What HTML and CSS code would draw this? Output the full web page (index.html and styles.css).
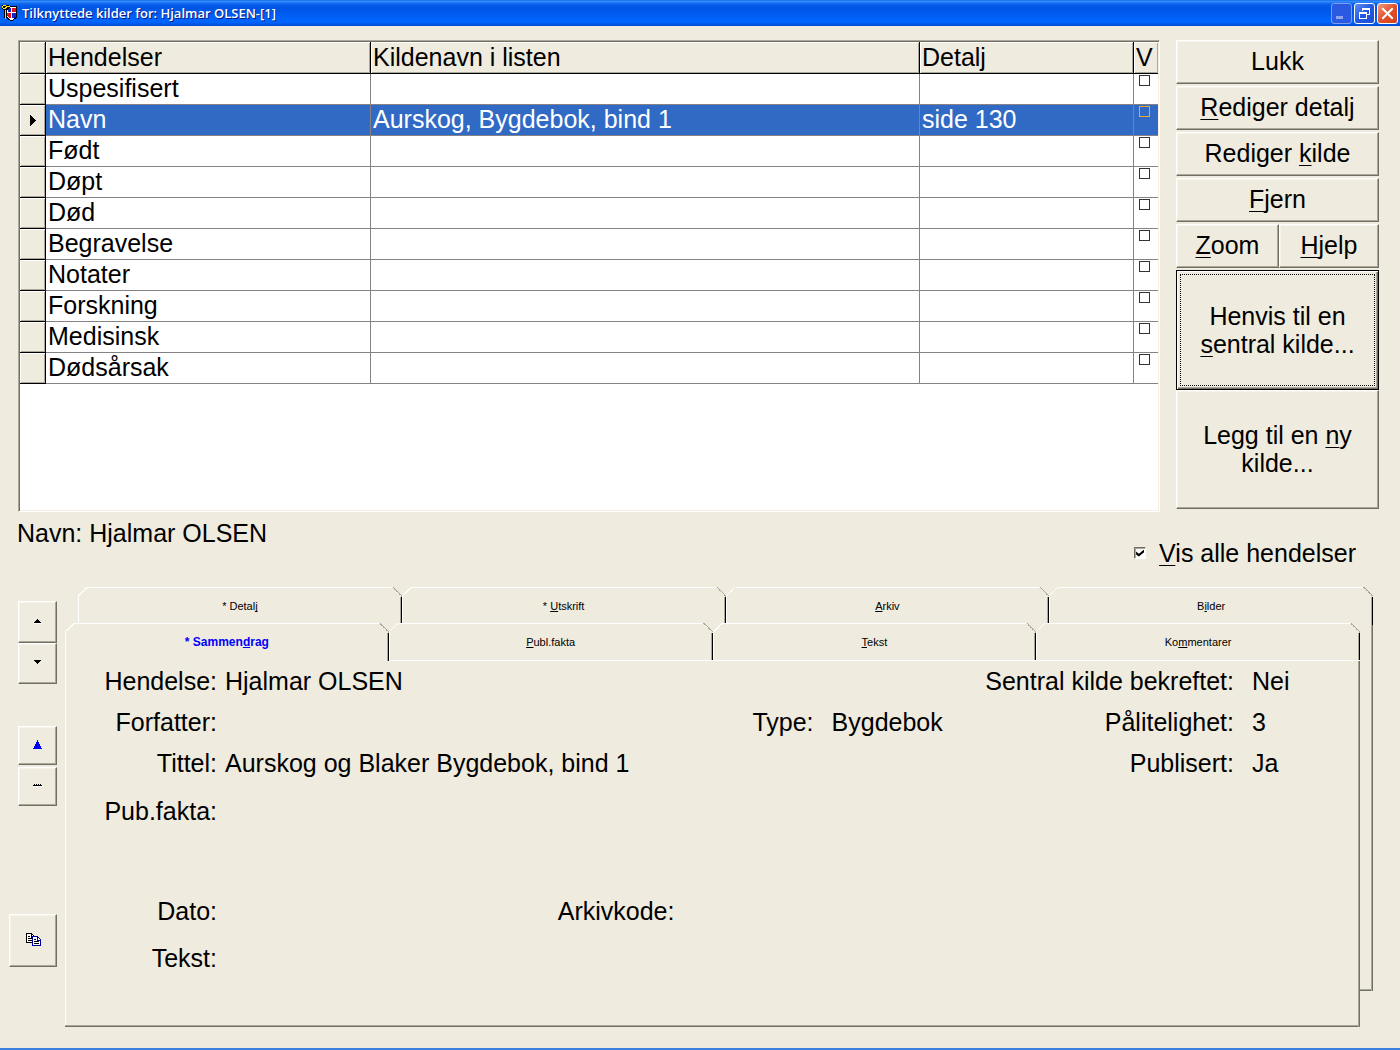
FILE: index.html
```html
<!DOCTYPE html>
<html lang="no">
<head>
<meta charset="utf-8">
<title>Tilknyttede kilder for: Hjalmar OLSEN-[1]</title>
<link rel="stylesheet" href="styles.css">
</head>
<body>
<header class="titlebar">
  <svg class="app-icon" width="16" height="18" viewBox="0 0 16 18" shape-rendering="crispEdges" aria-hidden="true">
    <path d="M2 2h13v11l-2 2-3 2-4-1-2-2H2z" fill="#000"/>
    <path d="M3 3h1v12H3z" fill="#c9c7ba"/>
    <path d="M5 3h9v9l-2 3-3 1-2-1-2-3z" fill="#fff"/>
    <path d="M6 4h3v4H6zM10 9h4v3l-2 2h-2z" fill="#1722c8"/>
    <path d="M10 4h4v4h-4zM5 9h4v5H7l-2-2z" fill="#e0161c"/>
    <path d="M0 1h5l3 1v2L5 6H1L0 4z" fill="#000"/>
    <path d="M1 1h3v1H1zM0 2h1v2H0zM1 4h3v1H1zM4 2h4v1H4zM3 3h2v1H3z" fill="#ffe800"/>
  </svg>
  <h1 class="title">Tilknyttede kilder for: Hjalmar OLSEN-[1]</h1>
  <div class="window-buttons">
    <button class="win-btn win-min" aria-label="Minimer"><svg width="19" height="19" viewBox="0 0 19 19" shape-rendering="crispEdges"><path d="M4 12h7v3H4z" fill="#8fa4ee"/></svg></button>
    <button class="win-btn" aria-label="Gjenopprett"><svg width="19" height="19" viewBox="0 0 19 19" shape-rendering="crispEdges" fill="none" stroke="#fff"><path d="M7 6.500V4.500H14.500V10.500H12M7 5.500H14M4.500 8.500H11.500V14.500H4.500zM4 9.500H12"/></svg></button>
    <button class="win-btn win-close" aria-label="Lukk vindu"><svg width="19" height="19" viewBox="0 0 19 19"><path d="M5 5l9 9M14 5l-9 9" stroke="#fff" stroke-width="2" stroke-linecap="square"/></svg></button>
  </div>
</header>

<main class="content">
  <section class="upper">
    <div class="list-box">
      <table class="list">
        <colgroup><col class="c-mark"><col class="c-event"><col><col class="c-detail"><col class="c-v"></colgroup>
        <thead>
          <tr><th></th><th>Hendelser</th><th>Kildenavn i listen</th><th>Detalj</th><th>V</th></tr>
        </thead>
        <tbody>
          <tr><th></th><td>Uspesifisert</td><td></td><td></td><td><input type="checkbox" aria-label="V Uspesifisert"></td></tr>
          <tr class="selected"><th><svg width="6" height="11" viewBox="0 0 6 11" shape-rendering="crispEdges"><path d="M0 0h1v1h1v1h1v1h1v1h1v1h1v1H5v1H4v1H3v1H2v1H1v1H0z"/></svg></th><td>Navn</td><td>Aurskog, Bygdebok, bind 1</td><td>side 130</td><td><input type="checkbox" aria-label="V Navn"></td></tr>
          <tr><th></th><td>Født</td><td></td><td></td><td><input type="checkbox" aria-label="V Født"></td></tr>
          <tr><th></th><td>Døpt</td><td></td><td></td><td><input type="checkbox" aria-label="V Døpt"></td></tr>
          <tr><th></th><td>Død</td><td></td><td></td><td><input type="checkbox" aria-label="V Død"></td></tr>
          <tr><th></th><td>Begravelse</td><td></td><td></td><td><input type="checkbox" aria-label="V Begravelse"></td></tr>
          <tr><th></th><td>Notater</td><td></td><td></td><td><input type="checkbox" aria-label="V Notater"></td></tr>
          <tr><th></th><td>Forskning</td><td></td><td></td><td><input type="checkbox" aria-label="V Forskning"></td></tr>
          <tr><th></th><td>Medisinsk</td><td></td><td></td><td><input type="checkbox" aria-label="V Medisinsk"></td></tr>
          <tr><th></th><td>Dødsårsak</td><td></td><td></td><td><input type="checkbox" aria-label="V Dødsårsak"></td></tr>
        </tbody>
      </table>
    </div>
    <div class="actions">
      <button class="btn">Lukk</button>
      <button class="btn"><u>R</u>ediger detalj</button>
      <button class="btn">Rediger <u>k</u>ilde</button>
      <button class="btn"><u>F</u>jern</button>
      <div class="pair">
        <button class="btn"><u>Z</u>oom</button>
        <button class="btn"><u>H</u>jelp</button>
      </div>
      <div class="stack">
        <button class="btn tall default"><span class="focus-ring"><span>Henvis til en<br><u>s</u>entral kilde...</span></span></button>
        <button class="btn tall">Legg til en <u>n</u>y<br>kilde...</button>
      </div>
    </div>
  </section>

  <div class="status">
    <span>Navn: Hjalmar OLSEN</span>
    <label class="show-all"><input type="checkbox" checked><span><u>V</u>is alle hendelser</span></label>
  </div>

  <section class="lower">
    <div class="tools">
      <div class="tool-group">
        <button class="btn tool tool-up" aria-label="Forrige"><svg width="8" height="5" viewBox="0 0 8 5" shape-rendering="crispEdges"><path d="M3 0h1v1h1v1h1v1h1v1H0V3h1V2h1V1h1z"/><path d="M0 4h8v1H0z" fill="#fff"/></svg></button>
        <button class="btn tool tool-down" aria-label="Neste"><svg width="8" height="5" viewBox="0 0 8 5" shape-rendering="crispEdges"><path d="M0 0h7v1H6v1H5v1H4v1H3V3H2V2H1V1H0z"/></svg></button>
      </div>
      <div class="tool-group spaced">
        <button class="btn tool" aria-label="Flytt opp"><svg width="9" height="9" viewBox="0 0 9 9" shape-rendering="crispEdges"><path d="M4 0h1v2h1v2h1v2h1v2h1v1H0V8h1V6h1V4h1V2h1z" fill="#00f"/></svg></button>
        <button class="btn tool" aria-label="Fjern merke"><svg width="9" height="3" viewBox="0 0 9 3" shape-rendering="crispEdges"><path d="M0 1h9v1H0zM1 0h1v1H1zM3 0h1v1H3zM5 0h1v1H5zM7 0h1v1H7z"/><path d="M0 2h9v1H0z" fill="#fff"/></svg></button>
      </div>
      <button class="btn copy" aria-label="Kopier"><svg width="15" height="13" viewBox="0 0 15 13" shape-rendering="crispEdges"><path d="M.5.500H5.500L8.500 3.500V9.500H.5z" fill="#fff" stroke="#000"/><path d="M2 3.500h2M2 5.500h4M2 7.500h4M5.500 1v3H8" stroke="#000" fill="none"/><path d="M6.500 3.500H11.500L14.500 6.500V12.500H6.500z" fill="#fff" stroke="#00009c"/><path d="M11.500 4v3H14" stroke="#00009c" fill="none"/><path d="M8 6.500h2M8 8.500h5M8 10.500h5" stroke="#000"/></svg></button>
    </div>

    <div class="notebook">
      <div class="card card-back">
        <div class="tabs">
          <button class="tab">* Detal<u>j</u></button>
          <button class="tab">* <u>U</u>tskrift</button>
          <button class="tab"><u>A</u>rkiv</button>
          <button class="tab">B<u>i</u>lder</button>
        </div>
      </div>
      <div class="card card-front">
        <div class="tabs">
          <button class="tab active">* Sammen<u>d</u>rag</button>
          <button class="tab"><u>P</u>ubl.fakta</button>
          <button class="tab"><u>T</u>ekst</button>
          <button class="tab">Ko<u>m</u>mentarer</button>
        </div>
        <div class="sheet">
          <span class="label">Hendelse:</span><span class="value">Hjalmar OLSEN</span>
          <span class="label wide">Sentral kilde bekreftet:</span><span class="value far">Nei</span>

          <span class="label first">Forfatter:</span>
          <span class="label wide">Type:</span>
          <div class="type"><span>Bygdebok</span><span>Pålitelighet:</span></div><span class="value far">3</span>

          <span class="label first">Tittel:</span><span class="value title-value">Aurskog og Blaker Bygdebok, bind 1</span>
          <span class="label">Publisert:</span><span class="value far">Ja</span>

          <span class="label first">Pub.fakta:</span>

          <span class="label first">Dato:</span><span class="label">Arkivkode:</span>

          <span class="label first">Tekst:</span>
        </div>
      </div>
    </div>
  </section>
</main>
</body>
</html>
```
FILE: styles.css
```css
:root {
  --face: #efebde;
  --light: #fff;
  --shade: #aca899;
  --dark: #716f64;
  --grid: #848284;
  --select: #316ac5;
}

* { box-sizing: border-box; }

body {
  margin: 0;
  min-height: 100vh;
  display: flex;
  flex-direction: column;
  background: var(--face);
  border-bottom: 2px solid #3a80dc;
  color: #000;
  font: 25px/28px "Liberation Sans", Arial, sans-serif;
}

button { font: inherit; color: inherit; }

u {
  text-decoration-thickness: 1px;
  text-underline-offset: 3px;
  text-decoration-skip-ink: none;
}

svg { display: block; }

/* Title bar */
.titlebar {
  display: flex;
  align-items: center;
  height: 26px;
  padding: 0 2px;
  background: linear-gradient(#0a5be0 0, #3a93ff 1px, #0a62ee 4px, #0054e3 8px, #0060f8 17px, #0066ff 22px, #0049d0 26px);
}

.title {
  flex: 1;
  margin: 0 0 0 4px;
  color: #fff;
  font: 600 13px/16px "Open Sans", "Trebuchet MS", sans-serif;
  text-shadow: 1px 1px #0a1883;
}

.window-buttons { display: flex; gap: 2px; }

.win-btn {
  width: 21px;
  height: 21px;
  padding: 0;
  border: 1px solid #fff;
  border-radius: 3px;
  background: linear-gradient(135deg, #5d8ef8, #2458e0 50%, #1c50d8);
}

.win-min { border-color: #7b9cf2; background: #2a5ae2; }
.win-close { background: linear-gradient(135deg, #f09a80, #e2512c 50%, #d0401a); }

/* Upper part */
.content {
  flex: 1;
  display: flex;
  flex-direction: column;
  padding: 14px 0 21px;
}

.upper {
  display: flex;
  gap: 16px;
  padding: 0 21px 0 18px;
}

.list-box {
  flex: 1;
  min-height: 472px;
  border: 1px solid;
  border-color: var(--shade) var(--light) var(--light) var(--shade);
  background: #fff;
  box-shadow: inset 1px 1px var(--dark), inset -1px -1px #f8efe4;
  padding: 1px;
}

.list {
  width: 100%;
  table-layout: fixed;
  border-spacing: 0;
}

.c-mark { width: 26px; }
.c-event { width: 325px; }
.c-detail { width: 214px; }
.c-v { width: 24px; }

.list th,
.list td {
  height: 31px;
  padding: 0 2px;
  text-align: left;
  vertical-align: top;
  font-weight: normal;
  border-right: 1px solid var(--grid);
  border-bottom: 1px solid var(--grid);
}

.list th {
  background: var(--face);
  border-color: #000;
  box-shadow: inset 1px 1px var(--light), inset -1px -1px var(--shade);
}

.list thead th { height: 32px; padding-top: 1px; }
.list tbody th { vertical-align: middle; padding-left: 10px; }
.list tr > :last-child { border-right: 0; }
.list .selected td { background: var(--select); color: #fff; }

.list input {
  appearance: none;
  display: block;
  width: 11px;
  height: 11px;
  margin: 1px 0 0 3px;
  border: 1px solid #333;
}

.list .selected input { border-color: #f5a623; }

/* Raised buttons */
.btn {
  padding: 0 0 2px;
  border: 1px solid;
  border-color: var(--light) var(--dark) var(--dark) var(--light);
  border-radius: 0;
  background: var(--face);
  box-shadow: inset -1px -1px var(--shade), inset 1px 1px #f8f3e8;
}

.actions {
  display: flex;
  flex-direction: column;
  gap: 2px;
  width: 203px;
}

.actions .btn { height: 44px; }
.pair { display: grid; grid-template-columns: 103fr 100fr; }
.stack { display: flex; flex-direction: column; }
.actions .tall { height: 119px; }

.actions .default {
  height: 120px;
  padding: 3px;
  border-color: #000;
  box-shadow: inset 1px 1px var(--light), inset -1px -1px var(--dark), inset -2px -2px var(--shade);
}

.focus-ring {
  display: grid;
  align-content: center;
  height: 100%;
  border: 1px dotted #000;
}

/* Status line */
.status {
  display: flex;
  justify-content: space-between;
  padding: 7px 44px 20px 17px;
}

.show-all {
  display: flex;
  align-items: center;
  gap: 13px;
  margin-top: 20px;
}

.show-all input {
  appearance: none;
  display: grid;
  place-items: center;
  width: 12px;
  height: 12px;
  margin: 0;
  border: 1px solid;
  border-color: var(--dark) var(--light) var(--light) var(--dark);
  box-shadow: inset 1px 1px var(--shade);
  background: #fff;
}

.show-all input:checked::before {
  content: "";
  width: 8px;
  height: 7px;
  background: #000;
  clip-path: polygon(0 30%, 35% 60%, 100% 0, 100% 40%, 35% 100%, 0 70%);
}

/* Lower part */
.lower {
  flex: 1;
  display: flex;
  gap: 8px;
  padding: 0 27px 0 9px;
}

.tools {
  display: flex;
  flex-direction: column;
  align-items: flex-end;
  width: 48px;
  padding-top: 14px;
}

.tool-group { display: flex; flex-direction: column; }
.spaced { gap: 2px; margin: 42px 0 108px; }

.tools .btn { display: grid; place-items: center; }
.tools .tool { width: 39px; height: 39px; }
.tools .tool-up { height: 42px; }
.tools .tool-down { height: 41px; }
.tools .copy { width: 48px; height: 53px; }

/* Two overlapping tab cards */
.notebook {
  flex: 1;
  display: grid;
  grid-template-columns: 13px 1fr 13px;
  grid-template-rows: 36px 1fr 36px;
}

.card {
  display: flex;
  flex-direction: column;
  background: linear-gradient(90deg, var(--shade) 1px, var(--dark) 1px) 100% 100% / 2px calc(100% - 10px) no-repeat,
    linear-gradient(var(--shade) 1px, var(--dark) 1px) 0 100% / 100% 2px no-repeat, var(--face);
}

.card-back { grid-area: 1 / 2 / 3 / 4; }
.card-front { grid-area: 2 / 1 / 4 / 3; }

.tabs { display: grid; grid-template-columns: repeat(4, 1fr); }

.tab {
  height: 38px;
  padding: 0;
  border: 0;
  font-size: 11px;
  line-height: 14px;
  background:
    linear-gradient(#fff 0 0) 10px 0 / calc(100% - 20px) 1px no-repeat,
    linear-gradient(#fff 0 0) 0 9px / 1px 100% no-repeat,
    linear-gradient(135deg, transparent calc(50% - 1px), #fff calc(50% - 1px) 50%, transparent 50%) 0 0 / 10px 10px no-repeat,
    linear-gradient(225deg, transparent calc(50% - 1px), var(--shade) calc(50% - 1px) 50%, transparent 50%) 100% 0 / 10px 10px no-repeat,
    linear-gradient(90deg, var(--shade) 1px, #000 1px) 100% 10px / 2px 100% no-repeat,
    var(--face);
}

.card-front .tab:not(.active) { border-bottom: 1px solid #fff; }
.tab.active { color: #00f; font-size: 12px; font-weight: bold; }
.tab u { text-underline-offset: 1px; }

.sheet {
  flex: 1;
  display: grid;
  grid-template-columns: 151px 457fr 139fr 420fr 126px;
  grid-template-rows: 41px 41px 48px 100px 47px 1fr;
  margin-bottom: 2px;
  padding-top: 6px;
  border-left: 1px solid var(--light);
  white-space: nowrap;
}

.label { text-align: right; }
.first { grid-column: 1; }
.wide { grid-column: span 2; }
.value { padding-left: 8px; }
.far { padding-left: 18px; }
.title-value { grid-column: span 2; }

.type {
  display: flex;
  justify-content: space-between;
  padding-left: 18px;
}
```
